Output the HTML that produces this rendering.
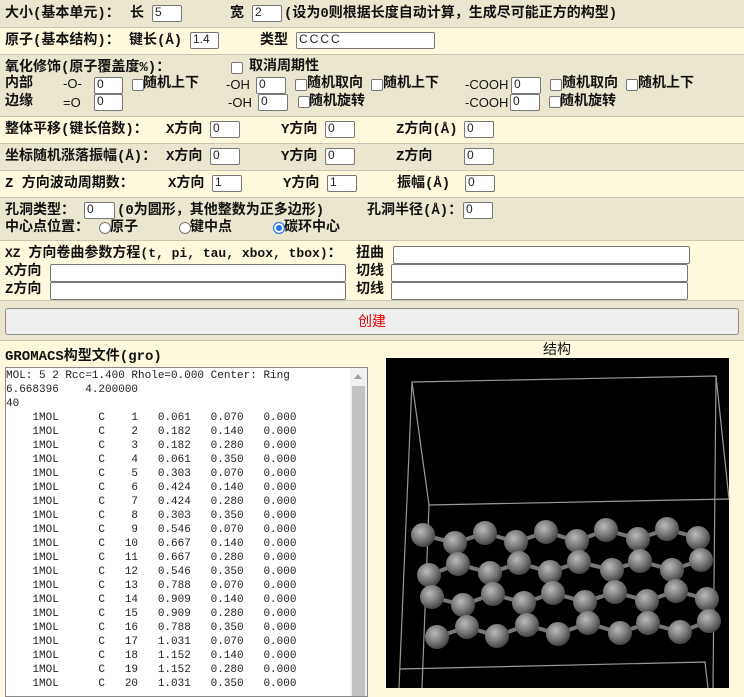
<!DOCTYPE html>
<html><head><meta charset="utf-8"><style>
body{margin:0;width:744px;height:688px;overflow:hidden;background:#fef9dc;font-family:"Liberation Mono","Noto Sans CJK SC",monospace;font-size:14px;font-weight:bold;color:#111;position:relative}
.r{position:absolute;left:0;width:744px;border-bottom:1px solid #c9c5b4}
.b{background:#ebe6d0}.c{background:#fef9dc}
.t{position:absolute;white-space:nowrap;line-height:16px}
.m{font-size:13px}
.i{position:absolute;height:15px;background:#fff;border:1px solid #777;border-radius:2px;box-sizing:border-box;font:12px "Liberation Sans",sans-serif;padding-left:2px;line-height:13px;color:#222;font-weight:normal}
.cb{position:absolute;width:10px;height:10px;border:1px solid #777;border-radius:2px;background:#fff}
.rd{position:absolute;width:10px;height:10px;border:1px solid #777;border-radius:50%;background:#fff}
.n{font-weight:normal;font-family:"Liberation Sans",sans-serif;font-size:13px}
pre{margin:0;font:11px/14px "Liberation Mono",monospace;color:#222}
</style></head><body>
<div class="r b" style="top:0;height:27px"></div>
<div class="r c" style="top:28px;height:26px"></div>
<div class="r b" style="top:55px;height:61px"></div>
<div class="r c" style="top:117px;height:26px"></div>
<div class="r b" style="top:144px;height:26px"></div>
<div class="r c" style="top:171px;height:26px"></div>
<div class="r b" style="top:198px;height:42px"></div>
<div class="r c" style="top:241px;height:59px"></div>
<div class="r b" style="top:301px;height:39px"></div>

<div class="t" style="left:5px;top:6px">大小(基本单元)：</div>
<div class="t" style="left:130px;top:6px">长</div><div class="i" style="left:152px;top:5px;width:30px;height:17px">5</div>
<div class="t" style="left:230px;top:6px">宽</div><div class="i" style="left:252px;top:5px;width:30px;height:17px">2</div>
<div class="t" style="left:284px;top:6px">(设为0则根据长度自动计算，生成尽可能正方的构型)</div>

<div class="t" style="left:5px;top:33px">原子(基本结构)：</div>
<div class="t" style="left:129px;top:33px">键长(Å)</div><div class="i" style="left:190px;top:32px;width:29px;height:17px">1.4</div>
<div class="t" style="left:260px;top:33px">类型</div><div class="i" style="left:296px;top:32px;width:139px;height:17px;letter-spacing:2px">CCCC</div>

<div class="t" style="left:5px;top:60px">氧化修饰(原子覆盖度%)：</div>
<div class="cb" style="left:231px;top:62px"></div><div class="t" style="left:249px;top:59px">取消周期性</div>
<div class="t" style="left:5px;top:76px">内部</div><div class="t n" style="left:63px;top:76px">-O-</div><div class="i" style="left:94px;top:77px;width:29px;height:17px">0</div>
<div class="cb" style="left:132px;top:79px"></div><div class="t" style="left:143px;top:76px">随机上下</div>
<div class="t n" style="left:226px;top:77px">-OH</div><div class="i" style="left:256px;top:77px;width:30px;height:17px">0</div>
<div class="cb" style="left:295px;top:79px"></div><div class="t" style="left:307px;top:76px">随机取向</div>
<div class="cb" style="left:371px;top:79px"></div><div class="t" style="left:383px;top:76px">随机上下</div>
<div class="t n" style="left:465px;top:77px">-COOH</div><div class="i" style="left:511px;top:77px;width:30px;height:17px">0</div>
<div class="cb" style="left:550px;top:79px"></div><div class="t" style="left:562px;top:76px">随机取向</div>
<div class="cb" style="left:626px;top:79px"></div><div class="t" style="left:638px;top:76px">随机上下</div>
<div class="t" style="left:5px;top:94px">边缘</div><div class="t n" style="left:63px;top:95px">=O</div><div class="i" style="left:94px;top:94px;width:29px;height:17px">0</div>
<div class="t n" style="left:228px;top:95px">-OH</div><div class="i" style="left:258px;top:94px;width:30px;height:17px">0</div>
<div class="cb" style="left:298px;top:96px"></div><div class="t" style="left:309px;top:94px">随机旋转</div>
<div class="t n" style="left:465px;top:95px">-COOH</div><div class="i" style="left:510px;top:94px;width:30px;height:17px">0</div>
<div class="cb" style="left:549px;top:96px"></div><div class="t" style="left:560px;top:94px">随机旋转</div>

<div class="t" style="left:5px;top:122px">整体平移(键长倍数)：</div>
<div class="t" style="left:166px;top:122px">X方向</div><div class="i" style="left:210px;top:121px;width:30px;height:17px">0</div>
<div class="t" style="left:281px;top:122px">Y方向</div><div class="i" style="left:325px;top:121px;width:30px;height:17px">0</div>
<div class="t" style="left:396px;top:122px">Z方向(Å)</div><div class="i" style="left:464px;top:121px;width:30px;height:17px">0</div>

<div class="t" style="left:5px;top:149px">坐标随机涨落振幅(Å)：</div>
<div class="t" style="left:166px;top:149px">X方向</div><div class="i" style="left:210px;top:148px;width:30px;height:17px">0</div>
<div class="t" style="left:281px;top:149px">Y方向</div><div class="i" style="left:325px;top:148px;width:30px;height:17px">0</div>
<div class="t" style="left:396px;top:149px">Z方向</div><div class="i" style="left:464px;top:148px;width:30px;height:17px">0</div>

<div class="t" style="left:5px;top:176px">Z 方向波动周期数：</div>
<div class="t" style="left:168px;top:176px">X方向</div><div class="i" style="left:212px;top:175px;width:30px;height:17px">1</div>
<div class="t" style="left:283px;top:176px">Y方向</div><div class="i" style="left:327px;top:175px;width:30px;height:17px">1</div>
<div class="t" style="left:397px;top:176px">振幅(Å)</div><div class="i" style="left:465px;top:175px;width:30px;height:17px">0</div>

<div class="t" style="left:5px;top:203px">孔洞类型：</div><div class="i" style="left:84px;top:202px;width:31px;height:17px">0</div>
<div class="t" style="left:117px;top:203px">(0为圆形，其他整数为正多边形)</div>
<div class="t" style="left:367px;top:203px">孔洞半径(Å)：</div><div class="i" style="left:463px;top:202px;width:30px;height:17px">0</div>
<div class="t" style="left:5px;top:220px">中心点位置：</div>
<div class="rd" style="left:99px;top:222px"></div><div class="t" style="left:110px;top:220px">原子</div>
<div class="rd" style="left:179px;top:222px"></div><div class="t" style="left:190px;top:220px">键中点</div>
<div class="rd" style="left:273px;top:222px;background:#1a73e8;border-color:#1a73e8;box-shadow:inset 0 0 0 2px #fff"></div><div class="t" style="left:284px;top:220px">碳环中心</div>

<div class="t" style="left:5px;top:246px"><span class="m">XZ </span>方向卷曲参数方程<span class="m">(t, pi, tau, xbox, tbox)</span>：</div>
<div class="t" style="left:356px;top:246px">扭曲</div><div class="i" style="left:393px;top:246px;width:297px;height:18px"></div>
<div class="t" style="left:5px;top:264px">X方向</div><div class="i" style="left:50px;top:264px;width:296px;height:18px"></div>
<div class="t" style="left:356px;top:264px">切线</div><div class="i" style="left:391px;top:264px;width:297px;height:18px"></div>
<div class="t" style="left:5px;top:282px">Z方向</div><div class="i" style="left:50px;top:282px;width:296px;height:18px"></div>
<div class="t" style="left:356px;top:282px">切线</div><div class="i" style="left:391px;top:282px;width:297px;height:18px"></div>

<div style="position:absolute;left:5px;top:308px;width:734px;height:27px;box-sizing:border-box;background:#eee;border:1px solid #8f8f8f;border-radius:3px;color:#e00;text-align:center;line-height:25px;font-weight:normal;font-family:'Liberation Sans','Noto Sans CJK SC',sans-serif">创建</div>

<div class="t" style="left:5px;top:349px">GROMACS构型文件(gro)</div>
<div style="position:absolute;left:5px;top:367px;width:363px;height:330px;background:#fff;border:1px solid #888;box-sizing:border-box;overflow:hidden">
<pre style="position:absolute;left:0;top:1px">MOL: 5 2 Rcc=1.400 Rhole=0.000 Center: Ring
6.668396    4.200000
40
    1MOL      C    1   0.061   0.070   0.000
    1MOL      C    2   0.182   0.140   0.000
    1MOL      C    3   0.182   0.280   0.000
    1MOL      C    4   0.061   0.350   0.000
    1MOL      C    5   0.303   0.070   0.000
    1MOL      C    6   0.424   0.140   0.000
    1MOL      C    7   0.424   0.280   0.000
    1MOL      C    8   0.303   0.350   0.000
    1MOL      C    9   0.546   0.070   0.000
    1MOL      C   10   0.667   0.140   0.000
    1MOL      C   11   0.667   0.280   0.000
    1MOL      C   12   0.546   0.350   0.000
    1MOL      C   13   0.788   0.070   0.000
    1MOL      C   14   0.909   0.140   0.000
    1MOL      C   15   0.909   0.280   0.000
    1MOL      C   16   0.788   0.350   0.000
    1MOL      C   17   1.031   0.070   0.000
    1MOL      C   18   1.152   0.140   0.000
    1MOL      C   19   1.152   0.280   0.000
    1MOL      C   20   1.031   0.350   0.000</pre>
<div style="position:absolute;left:344px;top:0;width:17px;height:330px;background:#f1f1f1"></div>
<div style="position:absolute;left:346px;top:18px;width:13px;height:320px;background:#c1c1c1"></div>
<div style="position:absolute;left:348px;top:6px;width:0;height:0;border-left:4px solid transparent;border-right:4px solid transparent;border-bottom:5px solid #a3a3a3"></div>
</div>

<div class="t" style="left:543px;top:343px;font-weight:normal">结构</div>
<svg style="position:absolute;left:0;top:0" width="744" height="688">
<defs><radialGradient id="g" cx="40%" cy="35%" r="65%"><stop offset="0" stop-color="#bbb"/><stop offset="0.6" stop-color="#777"/><stop offset="1" stop-color="#444"/></radialGradient></defs>
<rect x="386" y="358" width="343" height="330" fill="#000"/>
<g stroke="#999" stroke-width="1.2" fill="none">
<polyline points="399,688 412,382 716,376 713,688"/>
<line x1="412" y1="382" x2="429" y2="505"/><line x1="716" y1="376" x2="729" y2="499"/>
<polyline points="422,688 429,505 729,499"/>
<polyline points="400,669 705,662 708,688"/>
</g>
<g stroke="#777" stroke-width="4">
<polyline points="423,535 455,543 485,533 516,542 546,532 577,541 606,530 638,539 667,529 698,538"/>
<polyline points="429,575 458,564 490,573 519,563 550,572 579,562 612,570 640,561 672,570 701,560"/>
<polyline points="432,597 463,605 493,594 524,603 553,593 585,602 615,592 647,601 676,591 707,599"/>
<polyline points="437,637 467,627 497,636 527,625 558,634 588,623 620,633 648,623 680,632 709,621"/>
<line x1="455" y1="543" x2="458" y2="564"/><line x1="516" y1="542" x2="519" y2="563"/><line x1="577" y1="541" x2="579" y2="562"/><line x1="638" y1="539" x2="640" y2="561"/><line x1="698" y1="538" x2="701" y2="560"/>
<line x1="429" y1="575" x2="432" y2="597"/><line x1="490" y1="573" x2="493" y2="594"/><line x1="550" y1="572" x2="553" y2="593"/><line x1="612" y1="570" x2="615" y2="592"/><line x1="672" y1="570" x2="676" y2="591"/>
<line x1="463" y1="605" x2="467" y2="627"/><line x1="524" y1="603" x2="527" y2="625"/><line x1="585" y1="602" x2="588" y2="623"/><line x1="647" y1="601" x2="648" y2="623"/><line x1="707" y1="599" x2="709" y2="621"/>
</g>
<g fill="url(#g)">
<circle cx="423" cy="535" r="12"/><circle cx="455" cy="543" r="12"/><circle cx="485" cy="533" r="12"/><circle cx="516" cy="542" r="12"/><circle cx="546" cy="532" r="12"/><circle cx="577" cy="541" r="12"/><circle cx="606" cy="530" r="12"/><circle cx="638" cy="539" r="12"/><circle cx="667" cy="529" r="12"/><circle cx="698" cy="538" r="12"/>
<circle cx="429" cy="575" r="12"/><circle cx="458" cy="564" r="12"/><circle cx="490" cy="573" r="12"/><circle cx="519" cy="563" r="12"/><circle cx="550" cy="572" r="12"/><circle cx="579" cy="562" r="12"/><circle cx="612" cy="570" r="12"/><circle cx="640" cy="561" r="12"/><circle cx="672" cy="570" r="12"/><circle cx="701" cy="560" r="12"/>
<circle cx="432" cy="597" r="12"/><circle cx="463" cy="605" r="12"/><circle cx="493" cy="594" r="12"/><circle cx="524" cy="603" r="12"/><circle cx="553" cy="593" r="12"/><circle cx="585" cy="602" r="12"/><circle cx="615" cy="592" r="12"/><circle cx="647" cy="601" r="12"/><circle cx="676" cy="591" r="12"/><circle cx="707" cy="599" r="12"/>
<circle cx="437" cy="637" r="12"/><circle cx="467" cy="627" r="12"/><circle cx="497" cy="636" r="12"/><circle cx="527" cy="625" r="12"/><circle cx="558" cy="634" r="12"/><circle cx="588" cy="623" r="12"/><circle cx="620" cy="633" r="12"/><circle cx="648" cy="623" r="12"/><circle cx="680" cy="632" r="12"/><circle cx="709" cy="621" r="12"/>
</g>
</svg>
</body></html>
